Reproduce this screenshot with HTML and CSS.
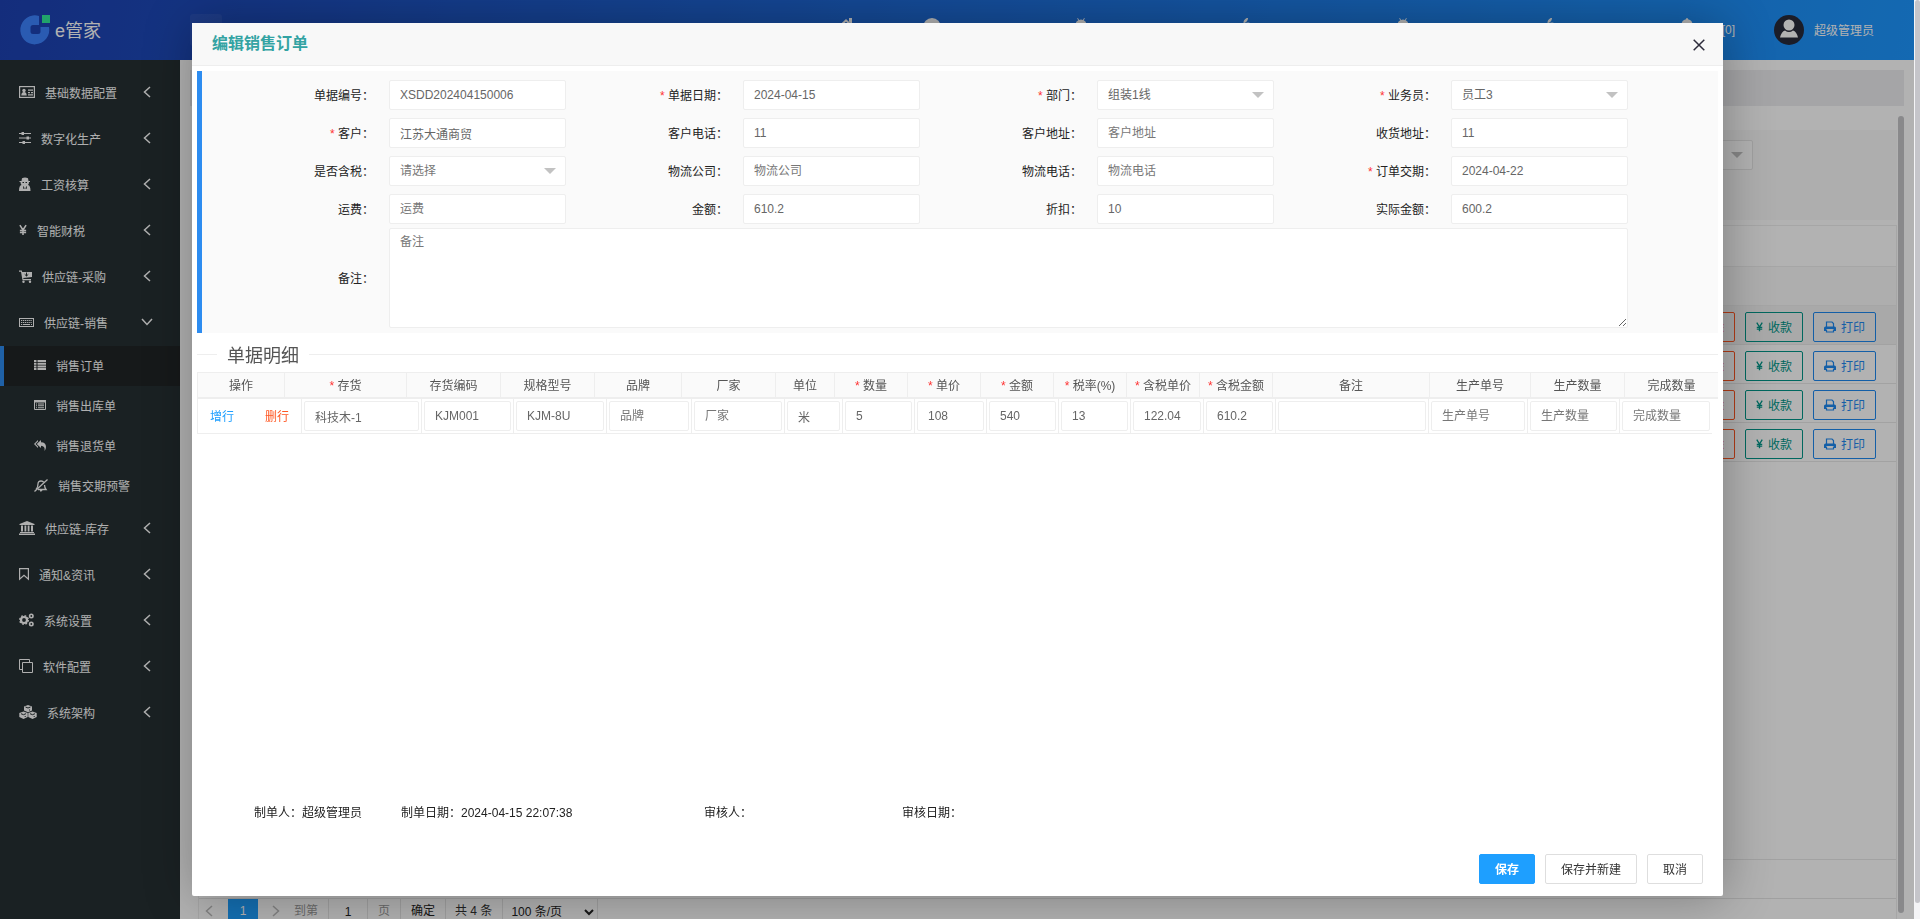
FILE: index.html
```html
<!DOCTYPE html>
<html lang="zh-CN">
<head>
<meta charset="utf-8">
<title>e管家</title>
<link rel="stylesheet" href="styles.css">
</head>
<body>
<svg class="sprite" aria-hidden="true">
  <symbol id="left" viewBox="0 0 8 12"><path d="M7 1L1.500 6L7 11" fill="none" stroke="currentColor" stroke-width="1.500"/></symbol>
  <symbol id="down" viewBox="0 0 12 8"><path d="M1 1L6 6.500L11 1" fill="none" stroke="currentColor" stroke-width="1.500"/></symbol>
  <symbol id="yen" viewBox="0 0 9 12"><path d="M1 .5L4.500 6L8 .5M4.500 5.500V11.500M1 6.500H8M1 8.800H8" fill="none" stroke="currentColor" stroke-width="1.700"/></symbol>
  <symbol id="print" viewBox="0 0 12 12"><path d="M2.500 6V1H8L9.500 2.500V6" fill="none" stroke="currentColor" stroke-width="1.200"/><path d="M1.500 5.500H10.500Q12 5.500 12 7V10H10V8H2V10H0V7Q0 5.500 1.500 5.500Z" fill="currentColor"/><path d="M2.500 8.500V11H9.500V8.500" fill="none" stroke="currentColor" stroke-width="1.200"/></symbol>
  <symbol id="android" viewBox="0 0 18 18"><path d="M3.500 6.500Q3.800 3.300 6.300 2.200L5.200 .4L5.900 0L7.100 1.900Q9 1.300 10.900 1.900L12.100 0L12.800 .4L11.700 2.200Q14.200 3.300 14.500 6.500ZM4 8H14V14.500H12V18H10V14.500H8V18H6V14.500H4ZM1 8H3V13H1ZM15 8H17V13H15Z" fill="currentColor"/></symbol>
  <symbol id="apple" viewBox="0 0 18 18"><path d="M8.500 5.200Q8.300 1 13 -.5Q13.300 4 8.500 5.200ZM9 6Q15 2.800 16 7Q13 9.500 16 13Q13 19 9.500 17Q7 18.500 5 16Q1 11 2.500 7.500Q4.500 3.500 9 6Z" fill="currentColor"/></symbol>
</svg>
<div class="viewport">
  <div class="app">
    <header class="topbar">
      <a class="brand" href="#">
        <svg width="30" height="30" viewBox="0 0 30 30"><path d="M19 1A14.500 14.500 0 1 0 29 12H20.500V16.500Q20.500 19 18 19H13Q10.500 19 10.500 16.500V12.500Q10.500 10 13 10H19Z" fill="#3d83ff"/><path d="M22 0H30V8H22Z" fill="#30ea9a"/></svg>
        <span>e管家</span>
      </a>
      <button class="fold" type="button" aria-label="折叠菜单"></button>
      <nav class="topnav">
        <a href="#" aria-label="首页"><svg width="18" height="18" viewBox="0 0 18 18"><path d="M8 1L17 9.500L15.800 11L8 3.800L.2 11L-1 9.500ZM11 0H14V6.500L11 3.500ZM8 5L14 10.500V17H10V12H6V17H2V10.500Z" fill="currentColor"/></svg></a>
        <a href="#" aria-label="帮助"><svg width="18" height="18" viewBox="0 0 18 18"><circle cx="9" cy="9" r="9" fill="currentColor"/></svg></a>
        <a href="#" aria-label="安卓端"><svg width="18" height="18"><use href="#android"/></svg></a>
        <a href="#" aria-label="苹果端"><svg width="18" height="18"><use href="#apple"/></svg></a>
        <a href="#" aria-label="安卓应用"><svg width="18" height="18"><use href="#android"/></svg></a>
        <a href="#" aria-label="苹果应用"><svg width="18" height="18"><use href="#apple"/></svg></a>
        <a href="#" aria-label="通知"><svg width="18" height="18" viewBox="0 0 18 18"><path d="M9 0Q10 0 10 1.200Q14.500 2 14.500 7Q14.500 12 17 14H1Q3.500 12 3.500 7Q3.500 2 8 1.200Q8 0 9 0ZM7 15H11Q11 17 9 17Q7 17 7 15Z" fill="currentColor"/></svg></a>
      </nav>
      <span class="count">[0]</span>
      <a class="user" href="#">
        <svg width="30" height="30" viewBox="0 0 30 30"><circle cx="15" cy="15" r="15" fill="#282a3a"/><circle cx="15" cy="10" r="5.500" fill="#fff"/><path d="M6 22.500Q7.500 16.500 11 15.500Q15 18.500 19 15.500Q22.500 16.500 24 22.500Z" fill="#fff"/></svg>
        <span>超级管理员</span>
      </a>
    </header>
    <div class="body">
      <ul class="menu">
        <li><a href="#"><svg width="16" height="12" viewBox="0 0 16 12"><rect x=".6" y=".6" width="14.800" height="10.800" fill="none" stroke="currentColor" stroke-width="1.200"/><circle cx="5" cy="4.500" r="1.700" fill="currentColor"/><path d="M2.300 9.500Q2.300 6 5 6Q7.700 6 7.700 9.500ZM9 3.500H14V4.700H9ZM9 6H11V7.200H9ZM12 6H14V7.200H12ZM9 8.300H14V9.500H9Z" fill="currentColor"/></svg><span>基础数据配置</span><svg class="arrow" width="8" height="12"><use href="#left"/></svg></a></li>
        <li><a href="#"><svg width="12" height="12" viewBox="0 0 12 12"><path d="M0 1.500H12M0 6H12M0 10.500H12" stroke="currentColor" stroke-width="1.200"/><path d="M2.500 0H5V3H2.500ZM7.500 4.500H10V7.500H7.500ZM3.500 9H6V12H3.500Z" fill="currentColor"/></svg><span>数字化生产</span><svg class="arrow" width="8" height="12"><use href="#left"/></svg></a></li>
        <li><a href="#"><svg width="12" height="14" viewBox="0 0 12 14"><path d="M3 1.200Q6 0 9 1.200L9.500 4H11V5H10Q10 7 9 8Q11.500 8.500 11.500 14H0Q0 8.500 2.500 8Q1.500 7 1.500 5H.5V4H2.500Z" fill="currentColor"/><path d="M4.500 9.500L5 12M7.500 9.500L7 12M3.500 5.500H5M6.500 5.500H8" stroke="#263033" fill="none"/></svg><span>工资核算</span><svg class="arrow" width="8" height="12"><use href="#left"/></svg></a></li>
        <li><a href="#"><svg width="8" height="12"><use href="#yen"/></svg><span>智能财税</span><svg class="arrow" width="8" height="12"><use href="#left"/></svg></a></li>
        <li><a href="#"><svg width="13" height="13" viewBox="0 0 13 13"><path d="M0 .5H2.800L3.200 2H13V7L4.200 8L4.500 9H12V10.200H3.500L2 1.800H0Z" fill="currentColor"/><circle cx="4.500" cy="11.700" r="1.200" fill="currentColor"/><circle cx="11" cy="11.700" r="1.200" fill="currentColor"/><path d="M7.500 2.500V6M5.700 4.300L7.500 6L9.300 4.300" stroke="#263033" fill="none"/></svg><span>供应链-采购</span><svg class="arrow" width="8" height="12"><use href="#left"/></svg></a></li>
        <li><a href="#"><svg width="15" height="9" viewBox="0 0 15 9"><rect x=".5" y=".5" width="14" height="8" fill="none" stroke="currentColor"/><path d="M2 2.500H13M2 4.500H13" stroke="currentColor" stroke-dasharray="1.200 .7"/><path d="M2 6.500H3.200M4 6.500H11M12 6.500H13" stroke="currentColor"/></svg><span>供应链-销售</span><svg class="arrow open" width="12" height="8"><use href="#down"/></svg></a>
          <ul class="submenu">
            <li><a class="active" href="#"><svg width="12" height="10" viewBox="0 0 12 10"><path d="M0 0H2.500V2H0ZM3.500 0H12V2H3.500ZM0 2.700H2.500V4.700H0ZM3.500 2.700H12V4.700H3.500ZM0 5.400H2.500V7.400H0ZM3.500 5.400H12V7.400H3.500ZM0 8H2.500V10H0ZM3.500 8H12V10H3.500Z" fill="currentColor"/></svg><span>销售订单</span></a></li>
            <li><a href="#"><svg width="12" height="10" viewBox="0 0 12 10"><path d="M.5 .5H11.500V9.500H.5Z" fill="none" stroke="currentColor"/><path d="M0 0H12V2.500H0ZM2 3.500H3V4.500H2ZM4 3.500H10V4.500H4ZM2 5.300H3V6.300H2ZM4 5.300H10V6.300H4ZM2 7.200H3V8.200H2ZM4 7.200H10V8.200H4Z" fill="currentColor"/></svg><span>销售出库单</span></a></li>
            <li><a href="#"><svg width="12" height="11" viewBox="0 0 12 11"><path d="M4 0V1.500L1.500 4L4 6.500V8L0 4ZM7 0V2.300Q12 2.500 12 7Q12 9 10.500 11Q11.500 6 7 5.800V8L2.800 4Z" fill="currentColor"/></svg><span>销售退货单</span></a></li>
            <li><a href="#"><svg width="14" height="13" viewBox="0 0 14 13"><path d="M2 10.500Q4 8.500 4 5Q4 2 7 2Q9 2 9.800 3.300M10.500 6Q10.700 9 12 10.500H4" fill="none" stroke="currentColor" stroke-width="1.300"/><path d="M13.500 .5L.5 12.500" stroke="currentColor" stroke-width="1.300"/><path d="M6 11H8.500Q8 13 6 12.500Z" fill="currentColor"/></svg><span>销售交期预警</span></a></li>
          </ul>
        </li>
        <li><a href="#"><svg width="16" height="14" viewBox="0 0 16 14"><path d="M8 0L15.500 3V4H.5V3ZM2 4.500H4V10.500H2ZM5.500 4.500H7.300V10.500H5.500ZM8.700 4.500H10.500V10.500H8.700ZM12 4.500H14V10.500H12ZM1 11H15V12H1ZM0 12.500H16V14H0Z" fill="currentColor"/></svg><span>供应链-库存</span><svg class="arrow" width="8" height="12"><use href="#left"/></svg></a></li>
        <li><a href="#"><svg width="10" height="12" viewBox="0 0 10 12"><path d="M.6 .6H9.400V11.200L5 7.300L.6 11.200Z" fill="none" stroke="currentColor" stroke-width="1.200"/></svg><span>通知&amp;资讯</span><svg class="arrow" width="8" height="12"><use href="#left"/></svg></a></li>
        <li><a href="#"><svg width="15" height="14" viewBox="0 0 15 14"><g fill="none" stroke="currentColor"><circle cx="5" cy="7" r="3" stroke-width="2.200"/><circle cx="5" cy="7" r="4.300" stroke-width="1.400" stroke-dasharray="1.700 1.677"/><circle cx="12.300" cy="3" r="1.700" stroke-width="1.600"/><circle cx="12.300" cy="11" r="1.700" stroke-width="1.600"/></g></svg><span>系统设置</span><svg class="arrow" width="8" height="12"><use href="#left"/></svg></a></li>
        <li><a href="#"><svg width="14" height="14" viewBox="0 0 14 14"><path d="M3.500 3.500H13.500V13.500H3.500ZM3 10.500H.5V.5H10.500V3" fill="none" stroke="currentColor"/></svg><span>软件配置</span><svg class="arrow" width="8" height="12"><use href="#left"/></svg></a></li>
        <li><a href="#"><svg width="18" height="14" viewBox="0 0 18 14"><path d="M9 0L13 1.500V5.500L9 7.300L5 5.500V1.500ZM4.500 6.500L8.700 8V12L4.500 14L.3 12V8ZM13.500 6.500L17.700 8V12L13.500 14L9.300 12V8Z" fill="currentColor"/><path d="M6.500 2L9 3L11.500 2M10.500 4.500V5.500M2 8.700L4.500 9.700L7 8.700M6.200 11V12M11 8.700L13.500 9.700L16 8.700M15.200 11V12" stroke="#263033" fill="none"/></svg><span>系统架构</span><svg class="arrow" width="8" height="12"><use href="#left"/></svg></a></li>
      </ul>
      <main class="main">
        <div class="tabs"></div>
        <div class="page">
          <div class="sheet">
            <div class="search"><span class="pick"><select aria-label="筛选"><option></option></select></span></div>
            <div class="grid">
              <div class="tools"></div>
              <div class="cols"></div>
              <ul class="orders">
                <li class="hover"><button class="red" type="button">删除</button><button class="green" type="button"><svg width="7" height="10"><use href="#yen"/></svg>收款</button><button class="blue" type="button"><svg width="12" height="12"><use href="#print"/></svg>打印</button></li>
                <li><button class="red" type="button">删除</button><button class="green" type="button"><svg width="7" height="10"><use href="#yen"/></svg>收款</button><button class="blue" type="button"><svg width="12" height="12"><use href="#print"/></svg>打印</button></li>
                <li><button class="red" type="button">删除</button><button class="green" type="button"><svg width="7" height="10"><use href="#yen"/></svg>收款</button><button class="blue" type="button"><svg width="12" height="12"><use href="#print"/></svg>打印</button></li>
                <li><button class="red" type="button">删除</button><button class="green" type="button"><svg width="7" height="10"><use href="#yen"/></svg>收款</button><button class="blue" type="button"><svg width="12" height="12"><use href="#print"/></svg>打印</button></li>
              </ul>
              <div class="total"></div>
              <div class="pager">
                <button class="step" type="button" aria-label="上一页"><svg width="8" height="12"><use href="#left"/></svg></button>
                <button class="current" type="button">1</button>
                <button class="step next" type="button" aria-label="下一页"><svg width="8" height="12"><use href="#left"/></svg></button>
                <label class="muted" for="goto">到第</label>
                <input id="goto" value="1">
                <span class="muted">页</span>
                <button class="go" type="button">确定</button>
                <span class="sum">共 4 条</span>
                <select aria-label="每页条数"><option>100 条/页</option></select>
              </div>
            </div>
          </div>
          <div class="thumb"></div>
        </div>
      </main>
    </div>
    <div class="shade"></div>
  </div>
  <div class="scroll"><div class="scroll-thumb"></div></div>
</div>

<section class="modal" role="dialog" aria-labelledby="title">
  <header class="modal-head">
    <h2 id="title">编辑销售订单</h2>
    <button class="close" type="button" aria-label="关闭"><svg width="12" height="12" viewBox="0 0 12 12"><path d="M.7 .7L11.300 11.300M11.300 .7L.7 11.300" stroke="#2d2c3b" stroke-width="1.500"/></svg></button>
  </header>
  <form class="modal-body">
    <div class="fields">
      <label for="f1">单据编号：</label><input id="f1" value="XSDD202404150006">
      <label for="f2"><b>*</b> 单据日期：</label><input id="f2" value="2024-04-15">
      <label for="f3"><b>*</b> 部门：</label><span class="pick"><select id="f3"><option>组装1线</option></select></span>
      <label for="f4"><b>*</b> 业务员：</label><span class="pick"><select id="f4"><option>员工3</option></select></span>
      <label for="f5"><b>*</b> 客户：</label><input id="f5" value="江苏大通商贸">
      <label for="f6">客户电话：</label><input id="f6" value="11">
      <label for="f7">客户地址：</label><input id="f7" placeholder="客户地址">
      <label for="f8">收货地址：</label><input id="f8" value="11">
      <label for="f9">是否含税：</label><span class="pick"><select id="f9" class="empty"><option>请选择</option></select></span>
      <label for="f10">物流公司：</label><input id="f10" placeholder="物流公司">
      <label for="f11">物流电话：</label><input id="f11" placeholder="物流电话">
      <label for="f12"><b>*</b> 订单交期：</label><input id="f12" value="2024-04-22">
      <label for="f13">运费：</label><input id="f13" placeholder="运费">
      <label for="f14">金额：</label><input id="f14" value="610.2">
      <label for="f15">折扣：</label><input id="f15" value="10">
      <label for="f16">实际金额：</label><input id="f16" value="600.2">
      <label class="note-label" for="f17">备注：</label><textarea id="f17" placeholder="备注"></textarea>
    </div>
    <h3 class="divider"><span>单据明细</span></h3>
    <table class="head">
      <colgroup><col style="width:88px"><col style="width:122px"><col style="width:94px"><col style="width:94px"><col style="width:87px"><col style="width:94px"><col style="width:59px"><col style="width:73px"><col style="width:73px"><col style="width:73px"><col style="width:73px"><col style="width:73px"><col style="width:73px"><col style="width:157px"><col style="width:101px"><col style="width:94px"><col style="width:93px"></colgroup>
      <thead><tr><th>操作</th><th><b>*</b> 存货</th><th>存货编码</th><th>规格型号</th><th>品牌</th><th>厂家</th><th>单位</th><th><b>*</b> 数量</th><th><b>*</b> 单价</th><th><b>*</b> 金额</th><th><b>*</b> 税率(%)</th><th><b>*</b> 含税单价</th><th><b>*</b> 含税金额</th><th>备注</th><th>生产单号</th><th>生产数量</th><th>完成数量</th></tr></thead>
    </table>
    <div class="rows">
    <table>
      <colgroup><col style="width:105px"><col style="width:120px"><col style="width:92px"><col style="width:93px"><col style="width:85px"><col style="width:93px"><col style="width:58px"><col style="width:72px"><col style="width:72px"><col style="width:72px"><col style="width:72px"><col style="width:73px"><col style="width:72px"><col style="width:153px"><col style="width:99px"><col style="width:92px"><col style="width:92px"></colgroup>
      <tbody><tr>
        <td class="ops"><a class="add" href="#">增行</a><a class="del" href="#">删行</a></td>
        <td><input aria-label="存货" value="科技木-1"></td>
        <td><input aria-label="存货编码" value="KJM001"></td>
        <td><input aria-label="规格型号" value="KJM-8U"></td>
        <td><input aria-label="品牌" placeholder="品牌"></td>
        <td><input aria-label="厂家" placeholder="厂家"></td>
        <td><input aria-label="单位" value="米"></td>
        <td><input aria-label="数量" value="5"></td>
        <td><input aria-label="单价" value="108"></td>
        <td><input aria-label="金额" value="540"></td>
        <td><input aria-label="税率" value="13"></td>
        <td><input aria-label="含税单价" value="122.04"></td>
        <td><input aria-label="含税金额" value="610.2"></td>
        <td><input aria-label="备注"></td>
        <td><input aria-label="生产单号" placeholder="生产单号"></td>
        <td><input aria-label="生产数量" placeholder="生产数量"></td>
        <td><input aria-label="完成数量" placeholder="完成数量"></td>
      </tr></tbody>
    </table>
    </div>
    <dl class="meta">
      <div><dt>制单人：</dt><dd>超级管理员</dd></div>
      <div><dt>制单日期：</dt><dd>2024-04-15 22:07:38</dd></div>
      <div><dt>审核人：</dt><dd></dd></div>
      <div><dt>审核日期：</dt><dd></dd></div>
    </dl>
    <div class="actions">
      <button class="primary" type="button">保存</button>
      <button type="button">保存并新建</button>
      <button type="button">取消</button>
    </div>
  </form>
</section>
</body>
</html>
```
FILE: styles.css
```css
* { box-sizing: border-box; }
body, ul, dl, dd, h2, h3 { margin: 0; padding: 0; }
ul { list-style: none; }
a { color: inherit; text-decoration: none; }
svg { display: block; flex: none; overflow: visible; }
.sprite { position: absolute; width: 0; height: 0; }
body, input, select, textarea, button {
  font-family: "Liberation Sans", "Noto Sans CJK SC", sans-serif;
  font-size: 12px;
}
body { color: #333; overflow: hidden; }
input, textarea, select {
  width: 100%;
  min-width: 0;
  height: 30px;
  margin: 0;
  padding: 0 10px;
  border: 1px solid #eee;
  border-radius: 2px;
  background: #fff;
  color: #666;
  outline: none;
}
::placeholder { color: #777; opacity: 1; }
button { cursor: pointer; margin: 0; }

.viewport { display: flex; height: 100vh; }
.app { position: relative; flex: 1; min-width: 0; display: flex; flex-direction: column; }
.shade { position: absolute; inset: 0; background: rgba(0, 0, 0, .3); }
.scroll { width: 6px; padding: 0 0 16px 1px; background: #f4f4f6; }
.scroll-thumb { height: 100%; border-radius: 3px; background: #c5c5ca; }

.topbar {
  display: flex;
  align-items: center;
  height: 60px;
  flex: none;
  padding: 0 40px 0 20px;
  color: #fff;
  background: linear-gradient(100deg, #1d41b2, #1e97ff);
}
.brand { display: flex; align-items: center; gap: 5px; width: 170px; font-size: 18px; }
.brand span, .user span { padding-bottom: 2px; }
.fold { width: 32px; height: 32px; border: 0; border-radius: 3px; background: rgba(255, 255, 255, .06); }
.topnav {
  display: grid;
  grid-template-columns: 85px 149px 163px 159px 145px 139px 44px;
  margin-left: auto;
  padding-bottom: 6px;
}
.user { display: flex; align-items: center; gap: 10px; margin-left: 39px; }

.body { flex: 1; min-height: 0; display: flex; }
.menu { width: 180px; flex: none; padding-top: 10px; background: #263033; color: #fbfbfb; }
.menu a { display: flex; align-items: center; gap: 10px; height: 46px; padding: 0 29px 2px 19px; }
.menu .open { margin-right: -2px; }
.arrow { margin-left: auto; }
.menu .submenu a { height: 40px; padding: 0 0 2px 34px; }
.menu .submenu .active { padding-left: 30px; border-left: 4px solid #2d8cf0; background: #202526; }

.main { flex: 1; min-width: 0; display: flex; flex-direction: column; padding: 10px 10px 0; background: #fff; }
.tabs { height: 36px; flex: none; background: #ececf0; }
.page { flex: 1; min-height: 0; display: flex; padding-top: 10px; }
.thumb { width: 6px; margin-bottom: 6px; border-radius: 3px; background: #c4c5c8; }
.sheet { flex: 1; min-width: 0; display: flex; flex-direction: column; padding: 14px 1px 0 8px; }
.search { height: 90px; flex: none; display: flex; justify-content: flex-end; padding: 10px 144px 0 0; background: #fafafa; }
.search .pick { width: 190px; }
.search select { border-color: #e6e6e6; }
.grid { flex: 1; min-height: 0; margin-top: 5px; display: flex; flex-direction: column; border: 1px solid #eee; border-bottom: 0; }
.tools { height: 41px; flex: none; border-bottom: 1px solid #eee; }
.cols { height: 39px; flex: none; border-bottom: 1px solid #eee; background: #fafafa; }
.orders { flex: 1; }
.orders li { display: flex; justify-content: flex-end; align-items: center; gap: 10px; height: 39px; padding: 3px 20px 0 0; border-bottom: 1px solid #e8e8e8; }
.orders .hover { background: #f2f2f2; }
.orders button { display: flex; align-items: center; gap: 5px; height: 30px; padding: 0 10px; border: 1px solid; border-radius: 2px; background: none; }
.red { color: #ff5722; }
.green { color: #009688; }
.blue { color: #1e88f0; }
.total { height: 39px; flex: none; border-top: 1px solid #e8e8e8; }
.pager { height: 21px; flex: none; display: flex; border-top: 1px solid #e6e6e6; color: #333; line-height: 24px; }
.pager button, .pager input, .pager select { height: 26px; padding: 0; border: 0 solid #e6e6e6; border-radius: 0; background: none; color: #222; line-height: 24px; }
.pager button { padding-bottom: 2px; }
.pager .step { width: 29px; padding-left: 6px; color: #bbb; }
.pager .next { display: flex; justify-content: center; align-items: center; width: 36px; padding-left: 0; transform: scaleX(-1); }
.pager .current { width: 30px; background: #1e9fff; color: #fff; }
.muted { color: #999; }
.pager input { width: 40px; margin: 0 10px; border-width: 0 1px; text-align: center; }
.pager .go { width: 46px; margin: 0 9px 0 10px; border-width: 0 1px; }
.pager select { width: 96px; margin-left: 10px; padding: 0 4px; border-width: 0 1px; }

.modal {
  position: fixed;
  inset: 23px 197px 23px 192px;
  display: flex;
  flex-direction: column;
  border-radius: 2px;
  background: #fff;
  box-shadow: 1px 1px 50px rgba(0, 0, 0, .3);
}
.modal-head { display: flex; justify-content: space-between; align-items: center; height: 43px; flex: none; padding: 0 16px 0 20px; border-bottom: 1px solid #eee; background: #f8f8f8; }
.modal-head h2 { font-size: 16px; line-height: 40px; color: #33a3a3; }
.close { padding: 4px 2px 2px; border: 0; background: none; }
.modal-body { flex: 1; min-height: 0; display: flex; flex-direction: column; padding: 5px 5px 12px; }
.fields {
  display: grid;
  grid-template-columns: repeat(8, 1fr);
  row-gap: 8px;
  align-items: center;
  padding: 9px 90px 5px 10px;
  border-left: 5px solid #2d8cf0;
  background: #fafafa;
}
.fields label { padding: 0 15px 2px 0; text-align: right; white-space: nowrap; color: #222; }
b { color: #f33; font-weight: 400; }
.fields textarea { grid-column: 2 / -1; height: 100px; padding: 5px 10px; line-height: 16px; resize: vertical; }
.note-label, .fields textarea { margin-top: -4px; }
.pick { position: relative; display: block; }
.pick select { display: block; appearance: none; }
.pick::after { content: ""; position: absolute; right: 10px; top: 12px; border: 6px solid transparent; border-top-color: #c2c2c2; border-bottom: 0; }
.empty { color: #777; }
.divider { display: flex; align-items: center; gap: 10px; height: 39px; flex: none; padding-top: 4px; font-size: 18px; font-weight: 400; color: #555; }
.divider span { padding-bottom: 2px; }
.divider::before, .divider::after { content: ""; height: 1px; background: #eee; width: 20px; }
.divider::after { flex: 1; }
table { width: 100%; table-layout: fixed; border-collapse: separate; border-spacing: 0; color: #555; }
.head th { height: 27px; padding: 0 0 2px; border: solid #eee; border-width: 1px 1px 2px 0; background: #fafafa; font-weight: 400; white-space: nowrap; }
.head th:first-child, .rows td:first-child { border-left-width: 1px; }
.head th:last-child { border-right-width: 0; }
.rows { flex: 1; padding-right: 6px; }
.rows td { height: 35px; padding: 2px; border: solid #eee; border-width: 0 1px 1px 0; }
.rows td:last-child { border-right-width: 0; }
.rows .ops { padding: 0 12px 2px; }
.add { color: #1e9fff; }
.del { float: right; color: #ff5722; }
.meta { display: grid; grid-template-columns: 147px 303px 198px 1fr; padding-left: 57px; line-height: 20px; color: #222; }
.meta div { display: flex; }
.actions { display: flex; justify-content: flex-end; gap: 10px; padding: 31px 15px 0 0; }
.actions button { height: 30px; padding: 0 15px 2px; border: 1px solid #dedede; border-radius: 2px; background: #fff; color: #333; }
.actions .primary { border-color: #1e9fff; background: #1e9fff; color: #fff; font-weight: 700; }
```
